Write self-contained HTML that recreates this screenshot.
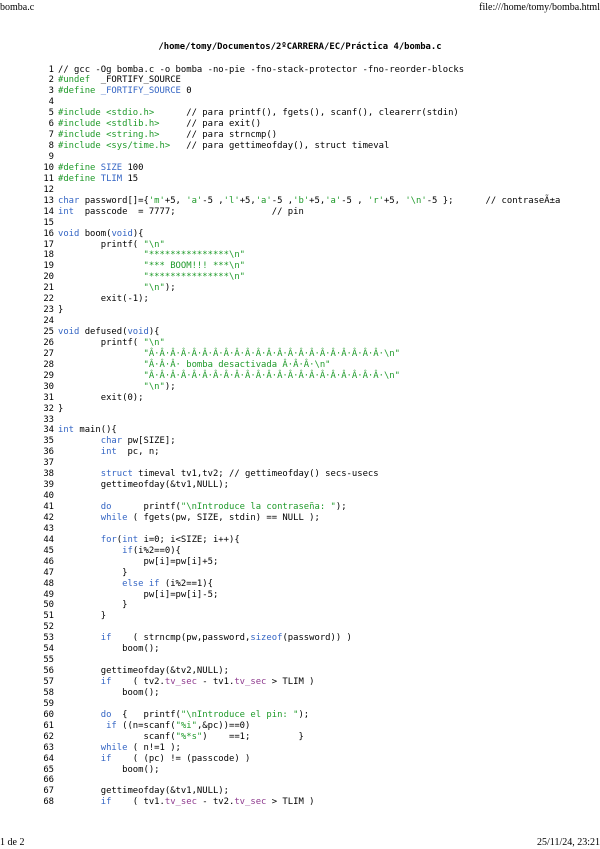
<!DOCTYPE html>
<html><head><meta charset="utf-8">
<style>
html,body{margin:0;padding:0;background:#fff;}
body{width:600px;height:848px;position:relative;overflow:hidden;color:#000;}
.hd{position:absolute;font-family:"Liberation Serif",serif;font-size:10px;line-height:12px;}
.title{position:absolute;top:42px;left:0;width:600px;text-align:center;font-family:"DejaVu Sans Mono","Liberation Mono",monospace;font-size:8.9px;font-weight:bold;}
pre{position:absolute;margin:0;font-family:"DejaVu Sans Mono","Liberation Mono",monospace;font-size:8.9px;line-height:10.94px;}
pre.n{left:40px;top:64.5px;width:14px;text-align:right;}
pre.c{left:58px;top:64.5px;}
.k{color:#3465c4}.g{color:#1f9a2a}.p{color:#8e3a8e}
</style></head><body>
<div class="hd" style="left:0;top:2px">bomba.c</div>
<div class="hd" style="right:0;top:2px">file:///home/tomy/bomba.html</div>
<div class="hd" style="left:0;top:837px">1 de 2</div>
<div class="hd" style="right:0;top:837px">25/11/24, 23:21</div>
<div class="title">/home/tomy/Documentos/2ºCARRERA/EC/Práctica 4/bomba.c</div>
<pre class="n">1
2
3
4
5
6
7
8
9
10
11
12
13
14
15
16
17
18
19
20
21
22
23
24
25
26
27
28
29
30
31
32
33
34
35
36
37
38
39
40
41
42
43
44
45
46
47
48
49
50
51
52
53
54
55
56
57
58
59
60
61
62
63
64
65
66
67
68</pre>
<pre class="c">// gcc -Og bomba.c -o bomba -no-pie -fno-stack-protector -fno-reorder-blocks
<span class="g">#undef</span>  _FORTIFY_SOURCE
<span class="g">#define</span> <span class="k">_FORTIFY_SOURCE</span> 0

<span class="g">#include &lt;stdio.h&gt;</span>      // para printf(), fgets(), scanf(), clearerr(stdin)
<span class="g">#include &lt;stdlib.h&gt;</span>     // para exit()
<span class="g">#include &lt;string.h&gt;</span>     // para strncmp()
<span class="g">#include &lt;sys/time.h&gt;</span>   // para gettimeofday(), struct timeval

<span class="g">#define</span> <span class="k">SIZE</span> 100
<span class="g">#define</span> <span class="k">TLIM</span> 15

<span class="k">char</span> password[]={<span class="g">'m'</span>+5, <span class="g">'a'</span>-5 ,<span class="g">'l'</span>+5,<span class="g">'a'</span>-5 ,<span class="g">'b'</span>+5,<span class="g">'a'</span>-5 , <span class="g">'r'</span>+5, <span class="g">'\n'</span>-5 };      // contraseÃ±a
<span class="k">int</span>  passcode  = 7777;                  // pin

<span class="k">void</span> boom(<span class="k">void</span>){
        printf( <span class="g">"\n"</span>
                <span class="g">"***************\n"</span>
                <span class="g">"*** BOOM!!! ***\n"</span>
                <span class="g">"***************\n"</span>
                <span class="g">"\n"</span>);
        exit(-1);
}

<span class="k">void</span> defused(<span class="k">void</span>){
        printf( <span class="g">"\n"</span>
                <span class="g">"Â·Â·Â·Â·Â·Â·Â·Â·Â·Â·Â·Â·Â·Â·Â·Â·Â·Â·Â·Â·Â·Â·\n"</span>
                <span class="g">"Â·Â·Â· bomba desactivada Â·Â·Â·\n"</span>
                <span class="g">"Â·Â·Â·Â·Â·Â·Â·Â·Â·Â·Â·Â·Â·Â·Â·Â·Â·Â·Â·Â·Â·Â·\n"</span>
                <span class="g">"\n"</span>);
        exit(0);
}

<span class="k">int</span> main(){
        <span class="k">char</span> pw[SIZE];
        <span class="k">int</span>  pc, n;

        <span class="k">struct</span> timeval tv1,tv2; // gettimeofday() secs-usecs
        gettimeofday(&amp;tv1,NULL);

        <span class="k">do</span>      printf(<span class="g">"\nIntroduce la contraseña: "</span>);
        <span class="k">while</span> ( fgets(pw, SIZE, stdin) == NULL );

        <span class="k">for</span>(<span class="k">int</span> i=0; i&lt;SIZE; i++){
            <span class="k">if</span>(i%2==0){
                pw[i]=pw[i]+5;
            }
            <span class="k">else if</span> (i%2==1){
                pw[i]=pw[i]-5;
            }
        }

        <span class="k">if</span>    ( strncmp(pw,password,<span class="k">sizeof</span>(password)) )
            boom();

        gettimeofday(&amp;tv2,NULL);
        <span class="k">if</span>    ( tv2.<span class="p">tv_sec</span> - tv1.<span class="p">tv_sec</span> &gt; TLIM )
            boom();

        <span class="k">do</span>  {   printf(<span class="g">"\nIntroduce el pin: "</span>);
         <span class="k">if</span> ((n=scanf(<span class="g">"%i"</span>,&amp;pc))==0)
                scanf(<span class="g">"%*s"</span>)    ==1;         }
        <span class="k">while</span> ( n!=1 );
        <span class="k">if</span>    ( (pc) != (passcode) )
            boom();

        gettimeofday(&amp;tv1,NULL);
        <span class="k">if</span>    ( tv1.<span class="p">tv_sec</span> - tv2.<span class="p">tv_sec</span> &gt; TLIM )</pre>
</body></html>
